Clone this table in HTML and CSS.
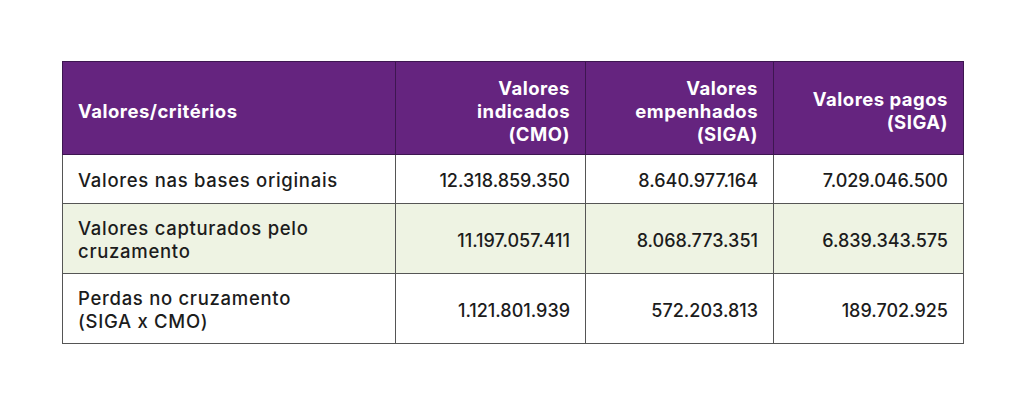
FILE: index.html
```html
<!DOCTYPE html>
<html lang="pt">
<head>
<meta charset="utf-8">
<title>Tabela</title>
<link rel="stylesheet" href="styles.css">
</head>
<body>
<div class="page">
  <table class="data">
    <colgroup>
      <col class="c1"><col class="c2"><col class="c3"><col class="c4">
    </colgroup>
    <thead>
      <tr class="head">
        <th class="lbl">Valores/critérios</th>
        <th class="num">Valores<br>indicados<br>(CMO)</th>
        <th class="num">Valores<br>empenhados<br>(SIGA)</th>
        <th class="num">Valores pagos<br>(SIGA)</th>
      </tr>
    </thead>
    <tbody>
      <tr class="r1">
        <td class="lbl">Valores nas bases originais</td>
        <td class="num">12.318.859.350</td>
        <td class="num">8.640.977.164</td>
        <td class="num">7.029.046.500</td>
      </tr>
      <tr class="r2 alt">
        <td class="lbl">Valores capturados pelo<br>cruzamento</td>
        <td class="num">11.197.057.411</td>
        <td class="num">8.068.773.351</td>
        <td class="num">6.839.343.575</td>
      </tr>
      <tr class="r3">
        <td class="lbl">Perdas no cruzamento<br>(SIGA x CMO)</td>
        <td class="num">1.121.801.939</td>
        <td class="num">572.203.813</td>
        <td class="num">189.702.925</td>
      </tr>
    </tbody>
  </table>
</div>
</body>
</html>
```
FILE: styles.css
```css
html, body {
  margin: 0;
  padding: 0;
  background: #ffffff;
}
.page {
  padding: 61px 0 0 62px;
  font-family: Inter, "Open Sans", sans-serif;
  color: #1c1c1c;
}
.data {
  border-collapse: collapse;
  width: 901px;
  table-layout: fixed;
  line-height: 23px;
}
.c1 { width: 333px; }
.c2 { width: 190px; }
.c3 { width: 188px; }
.c4 { width: 190px; }
.data th, .data td {
  border: 1px solid #555555;
  padding: 3px 15px 0;
  vertical-align: middle;
}
.head {
  height: 93px;
  background: #65247f;
  color: #ffffff;
}
.head th {
  font-size: 18.5px;
  font-weight: 700;
  letter-spacing: 0.5px;
  border-color: #3d1650;
  padding-top: 6px;
}
.data td.lbl {
  font-size: 18.5px;
  font-weight: 500;
  letter-spacing: 0.7px;
}
.data td.num {
  font-size: 18px;
  font-weight: 500;
}
.lbl { text-align: left; }
.num { text-align: right; }
.r1 { height: 49px; }
.r2 { height: 70px; }
.r3 { height: 70px; }
.alt { background: #eef3e3; }
```
